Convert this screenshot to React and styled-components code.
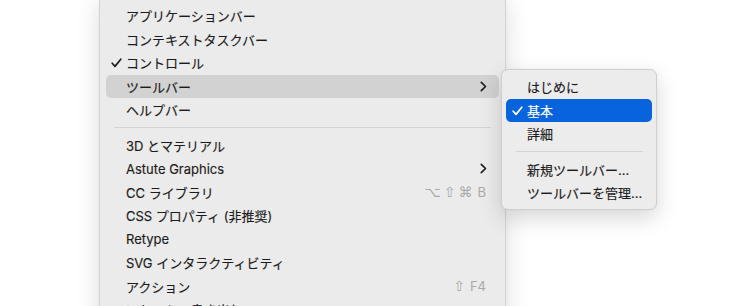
import React from "react";
import styled, { createGlobalStyle } from "styled-components";

const GlobalStyle = createGlobalStyle`
  html, body {
    margin: 0;
    padding: 0;
    background: #ffffff;
    overflow: hidden;
  }
  body {
    font-family: Inter, "Noto Sans CJK JP", sans-serif;
  }
`;

const Page = styled.div`
  position: relative;
  width: 750px;
  height: 306px;
  overflow: hidden;
`;

const MainMenu = styled.div`
  box-sizing: border-box;
  width: 407px;
  margin: -6px 0 0 99px;
  padding: 9px 0 8px;
  background: #ebebeb;
  border: 1px solid #d3d3d3;
  border-radius: 8px;
  box-shadow: 0 6px 24px rgba(0, 0, 0, 0.14), 0 0 2px rgba(0, 0, 0, 0.05);
`;

const SubMenu = styled.div`
  position: absolute;
  left: 501px;
  top: 69px;
  box-sizing: border-box;
  width: 156px;
  padding: 5px 0 4px;
  background: #ececec;
  border: 1px solid #cfcfcf;
  border-radius: 7px;
  box-shadow: 0 8px 22px rgba(0, 0, 0, 0.16), 0 0 2px rgba(0, 0, 0, 0.06);
`;

const Row = styled.div`
  display: flex;
  align-items: center;
  height: 23.5px;
  margin: 0 ${(p) => p.$inset}px;
  padding: 0 ${(p) => p.$padRight}px 0 ${(p) => p.$padLeft}px;
  border-radius: 5px;
  position: relative;
  font-size: 13px;
  color: ${(p) => (p.$active ? "#ffffff" : "#1b1b1b")};
  background: ${(p) =>
    p.$active ? "#0864dd" : p.$hover ? "#d2d2d2" : "transparent"};
`;

const Check = styled.span`
  position: absolute;
  left: ${(p) => p.$left}px;
  top: 7px;
  display: flex;
`;

const Label = styled.span`
  flex: 1;
  white-space: nowrap;
  -webkit-text-stroke: 0.15px currentColor;
`;

const Shortcut = styled.span`
  display: flex;
  align-items: center;
  gap: 3px;
  margin-right: 1px;
  color: #a9a9a9;
  white-space: nowrap;
`;

const Key = styled.span`
  font-family: ${(p) =>
    p.$symbol ? `"DejaVu Sans", sans-serif` : `Inter, sans-serif`};
  font-size: ${(p) => (p.$symbol ? "14px" : "13px")};
  margin-left: ${(p) => (p.$gap ? "2px" : "0")};
`;

const Separator = styled.div`
  height: 1px;
  margin: ${(p) => p.$margin};
  background: #d4d4d4;
`;

const CheckIcon = ({ color }) => (
  <svg width="11" height="10" viewBox="0 0 11 10" fill="none">
    <path
      d="M1.2 5.2 L4 8.4 L9.8 1.2"
      stroke={color}
      strokeWidth="1.7"
      strokeLinecap="round"
      strokeLinejoin="round"
    />
  </svg>
);

const Chevron = () => (
  <svg width="7" height="11" viewBox="0 0 7 11" fill="none">
    <path
      d="M1.3 1.3 L5.5 5.5 L1.3 9.7"
      stroke="#1e1e1e"
      strokeWidth="1.7"
      strokeLinecap="round"
      strokeLinejoin="round"
    />
  </svg>
);

const mainItems = [
  { label: "アプリケーションバー" },
  { label: "コンテキストタスクバー" },
  { label: "コントロール", checked: true },
  { label: "ツールバー", sub: true, hover: true },
  { label: "ヘルプバー" },
  { sep: true },
  { label: "3D とマテリアル" },
  { label: "Astute Graphics", sub: true },
  { label: "CC ライブラリ", shortcut: ["⌥", "⇧", "⌘", "B"] },
  { label: "CSS プロパティ (非推奨)" },
  { label: "Retype" },
  { label: "SVG インタラクティビティ" },
  { label: "アクション", shortcut: ["⇧", "F4"] },
  { label: "アセットの書き出し" },
];

const subItems = [
  { label: "はじめに" },
  { label: "基本", checked: true, active: true },
  { label: "詳細" },
  { sep: true },
  { label: "新規ツールバー..." },
  { label: "ツールバーを管理..." },
];

const isSymbol = (k) => ["⌥", "⇧", "⌘"].includes(k);

const App = () => {
  return (
    <>
      <GlobalStyle />
      <Page>
        <MainMenu>
          {mainItems.map((item, i) =>
            item.sep ? (
              <Separator key={i} $margin="5px 14px 6px 14px" />
            ) : (
              <Row
                key={i}
                $inset={6}
                $padLeft={20}
                $padRight={12}
                $hover={item.hover}
              >
                {item.checked && (
                  <Check $left={5}>
                    <CheckIcon color="#1e1e1e" />
                  </Check>
                )}
                <Label>{item.label}</Label>
                {item.sub && <Chevron />}
                {item.shortcut && (
                  <Shortcut>
                    {item.shortcut.map((k, j) => (
                      <Key key={j} $symbol={isSymbol(k)} $gap={!isSymbol(k)}>
                        {k}
                      </Key>
                    ))}
                  </Shortcut>
                )}
              </Row>
            )
          )}
        </MainMenu>
        <SubMenu>
          {subItems.map((item, i) =>
            item.sep ? (
              <Separator key={i} $margin="5px 13px 6px 14px" />
            ) : (
              <Row
                key={i}
                $inset={4}
                $padLeft={21}
                $padRight={8}
                $active={item.active}
              >
                {item.checked && (
                  <Check $left={6}>
                    <CheckIcon color={item.active ? "#ffffff" : "#1e1e1e"} />
                  </Check>
                )}
                <Label>{item.label}</Label>
              </Row>
            )
          )}
        </SubMenu>
      </Page>
    </>
  );
};

export default App;
